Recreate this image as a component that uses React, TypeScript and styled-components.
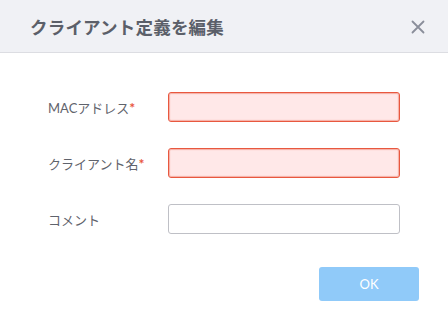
import React from "react";
import styled, { createGlobalStyle } from "styled-components";

const GlobalStyle = createGlobalStyle`
  html, body {
    margin: 0;
    padding: 0;
    background: #ffffff;
  }
  body {
    font-family: Lato, "Noto Sans CJK JP", sans-serif;
  }
`;

const Dialog = styled.div`
  width: 448px;
  height: 321px;
  background: #ffffff;
  display: flex;
  flex-direction: column;
`;

const Header = styled.div`
  height: 52px;
  background: #f0f1f5;
  border-bottom: 1px solid #dcdde2;
  display: flex;
  align-items: center;
  justify-content: space-between;
  padding: 0 22px 0 30px;
`;

const Title = styled.h2`
  margin: 0;
  font-size: 17.5px;
  font-weight: 700;
  color: #5b5f69;
  letter-spacing: 0.2px;
`;

const CloseButton = styled.button`
  border: none;
  background: none;
  padding: 0;
  width: 16px;
  height: 16px;
  display: flex;
  cursor: pointer;
  margin-top: 2px;
`;

const Body = styled.div`
  display: flex;
  flex-direction: column;
  gap: 26px;
  padding: 39px 48px 0 48px;
`;

const Row = styled.div`
  display: flex;
  align-items: center;
`;

const Label = styled.label`
  width: 120px;
  font-size: 13px;
  color: #5f636c;
`;

const Required = styled.span`
  color: #e8553d;
  font-weight: 700;
  font-size: 14px;
`;

const Input = styled.input<{ $invalid?: boolean }>`
  box-sizing: border-box;
  width: 232px;
  height: 30px;
  border-radius: 3px;
  border: 1px solid ${(p) => (p.$invalid ? "#e8583f" : "#bfc0c6")};
  background: ${(p) => (p.$invalid ? "#ffe8e8" : "#ffffff")};
  box-shadow: ${(p) =>
    p.$invalid ? "inset 0 0 1px 1px rgba(232, 88, 63, 0.4)" : "none"};
  outline: none;
  padding: 0 8px;
  font-size: 13px;
`;

const Footer = styled.div`
  display: flex;
  justify-content: flex-end;
  padding: 33px 29px 0 0;
`;

const OkButton = styled.button`
  width: 100px;
  height: 34px;
  border: none;
  border-radius: 3px;
  background: #90caf9;
  color: #ffffff;
  font-family: Lato, "Noto Sans CJK JP", sans-serif;
  font-size: 13px;
`;

const App: React.FC = () => {
  return (
    <>
      <GlobalStyle />
      <Dialog>
        <Header>
          <Title>クライアント定義を編集</Title>
          <CloseButton aria-label="close">
            <svg width="16" height="16" viewBox="0 0 16 16">
              <path
                d="M2.5 2.5 L13.5 13.5 M13.5 2.5 L2.5 13.5"
                stroke="#8a8e9a"
                strokeWidth="1.8"
                strokeLinecap="round"
              />
            </svg>
          </CloseButton>
        </Header>
        <Body>
          <Row>
            <Label>
              MACアドレス<Required>*</Required>
            </Label>
            <Input $invalid />
          </Row>
          <Row>
            <Label>
              クライアント名<Required>*</Required>
            </Label>
            <Input $invalid />
          </Row>
          <Row>
            <Label>コメント</Label>
            <Input />
          </Row>
        </Body>
        <Footer>
          <OkButton>OK</OkButton>
        </Footer>
      </Dialog>
    </>
  );
};

export default App;
